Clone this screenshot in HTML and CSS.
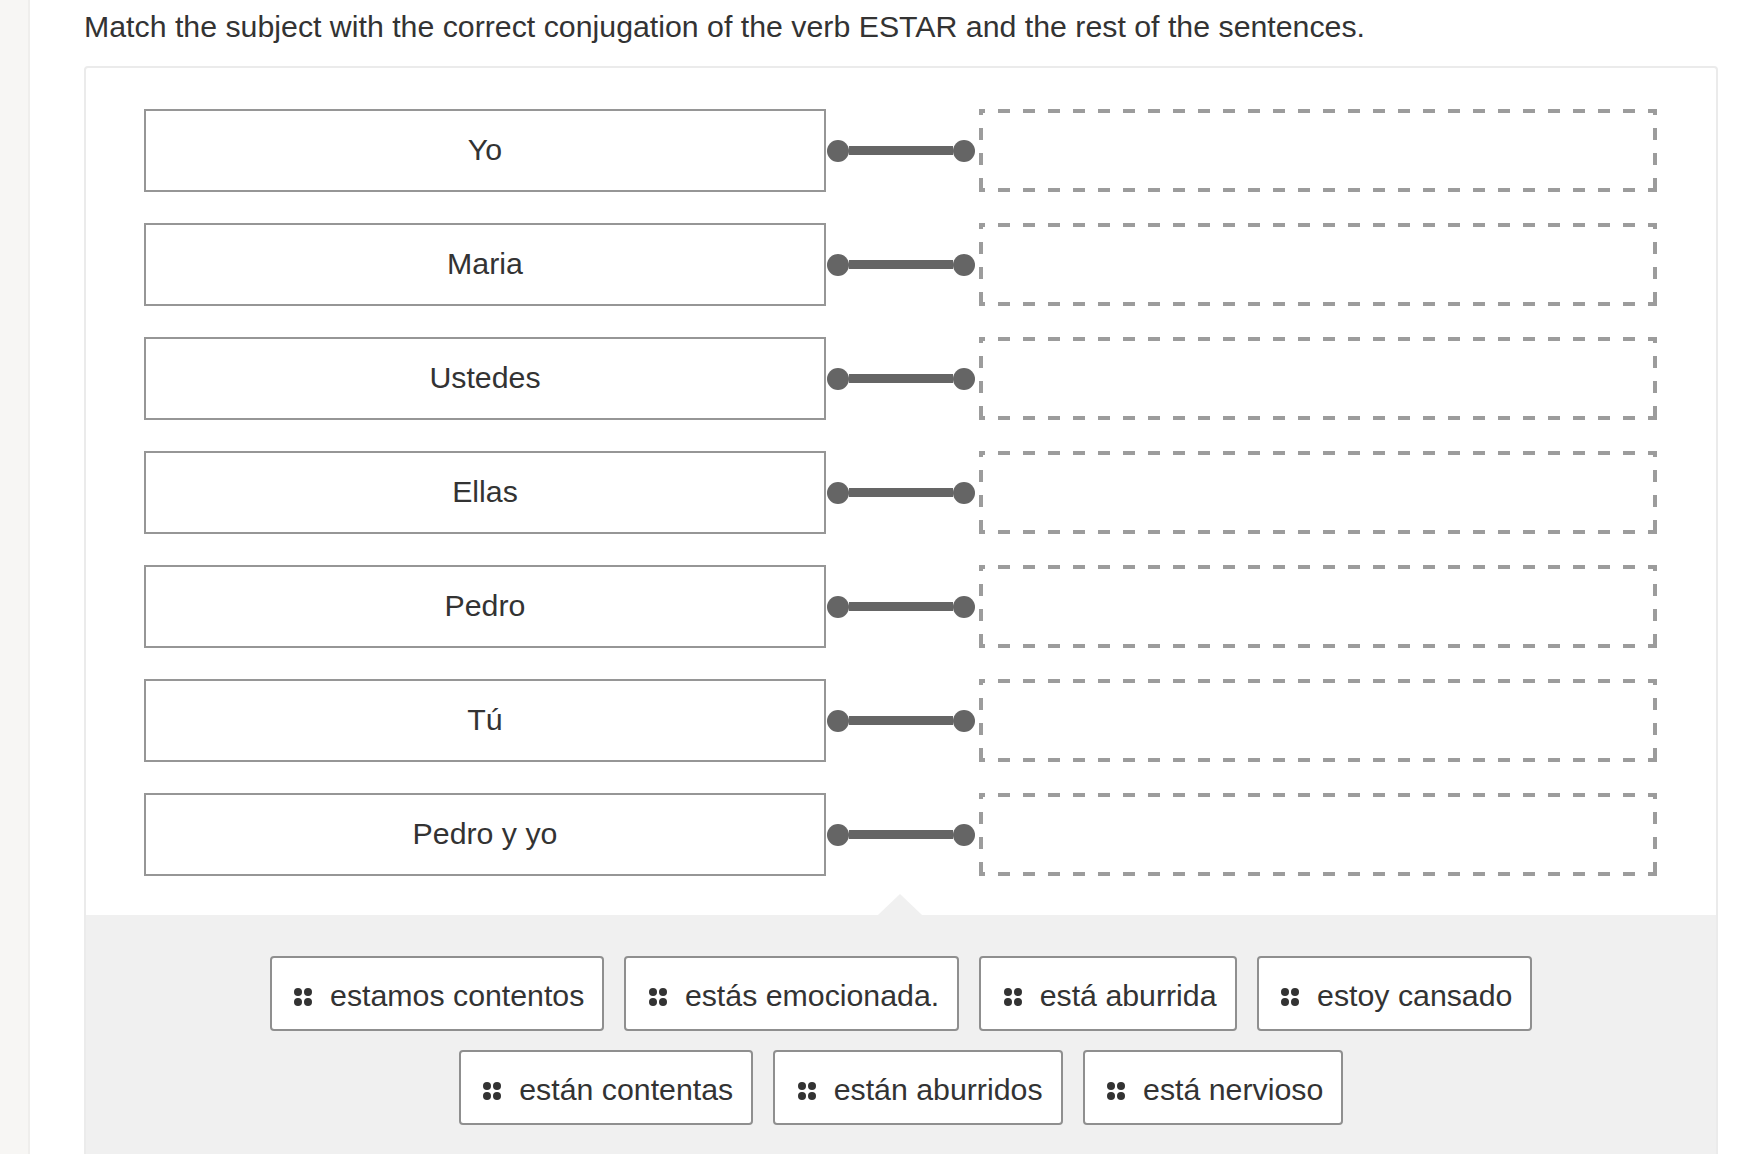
FILE: index.html
```html
<!DOCTYPE html>
<html lang="en">
<head>
<meta charset="utf-8">
<title>Match ESTAR</title>
<link rel="stylesheet" href="styles.css">
</head>
<body>
<div class="page">
  <aside class="sidebar"></aside>
  <main class="content">
    <p class="title">Match the subject with the correct conjugation of the verb ESTAR and the rest of the sentences.</p>
    <section class="card">
      <div class="pairs">
        <div class="row"><div class="subject">Yo</div><div class="connector"><span class="dot"></span><span class="bar"></span><span class="dot"></span></div><div class="target"></div></div>
        <div class="row"><div class="subject">Maria</div><div class="connector"><span class="dot"></span><span class="bar"></span><span class="dot"></span></div><div class="target"></div></div>
        <div class="row"><div class="subject">Ustedes</div><div class="connector"><span class="dot"></span><span class="bar"></span><span class="dot"></span></div><div class="target"></div></div>
        <div class="row"><div class="subject">Ellas</div><div class="connector"><span class="dot"></span><span class="bar"></span><span class="dot"></span></div><div class="target"></div></div>
        <div class="row"><div class="subject">Pedro</div><div class="connector"><span class="dot"></span><span class="bar"></span><span class="dot"></span></div><div class="target"></div></div>
        <div class="row"><div class="subject">Tú</div><div class="connector"><span class="dot"></span><span class="bar"></span><span class="dot"></span></div><div class="target"></div></div>
        <div class="row"><div class="subject">Pedro y yo</div><div class="connector"><span class="dot"></span><span class="bar"></span><span class="dot"></span></div><div class="target"></div></div>
      </div>
      <div class="bank">
        <div class="chips">
          <div class="chip"><svg class="grip" viewBox="0 0 18 18" width="18" height="18"><circle cx="4" cy="4" r="4"/><circle cx="14" cy="4" r="4"/><circle cx="4" cy="14" r="4"/><circle cx="14" cy="14" r="4"/></svg><span>estamos contentos</span></div>
          <div class="chip"><svg class="grip" viewBox="0 0 18 18" width="18" height="18"><circle cx="4" cy="4" r="4"/><circle cx="14" cy="4" r="4"/><circle cx="4" cy="14" r="4"/><circle cx="14" cy="14" r="4"/></svg><span>estás emocionada.</span></div>
          <div class="chip"><svg class="grip" viewBox="0 0 18 18" width="18" height="18"><circle cx="4" cy="4" r="4"/><circle cx="14" cy="4" r="4"/><circle cx="4" cy="14" r="4"/><circle cx="14" cy="14" r="4"/></svg><span>está aburrida</span></div>
          <div class="chip"><svg class="grip" viewBox="0 0 18 18" width="18" height="18"><circle cx="4" cy="4" r="4"/><circle cx="14" cy="4" r="4"/><circle cx="4" cy="14" r="4"/><circle cx="14" cy="14" r="4"/></svg><span>estoy cansado</span></div>
          <div class="chip"><svg class="grip" viewBox="0 0 18 18" width="18" height="18"><circle cx="4" cy="4" r="4"/><circle cx="14" cy="4" r="4"/><circle cx="4" cy="14" r="4"/><circle cx="14" cy="14" r="4"/></svg><span>están contentas</span></div>
          <div class="chip"><svg class="grip" viewBox="0 0 18 18" width="18" height="18"><circle cx="4" cy="4" r="4"/><circle cx="14" cy="4" r="4"/><circle cx="4" cy="14" r="4"/><circle cx="14" cy="14" r="4"/></svg><span>están aburridos</span></div>
          <div class="chip"><svg class="grip" viewBox="0 0 18 18" width="18" height="18"><circle cx="4" cy="4" r="4"/><circle cx="14" cy="4" r="4"/><circle cx="4" cy="14" r="4"/><circle cx="14" cy="14" r="4"/></svg><span>está nervioso</span></div>
        </div>
      </div>
    </section>
  </main>
</div>
</body>
</html>
```

FILE: styles.css
```css
* { box-sizing: border-box; }

html, body {
  margin: 0;
  padding: 0;
  background: #ffffff;
}

body {
  font-family: "Liberation Sans", Arial, Helvetica, sans-serif;
  color: #333333;
  overflow: hidden;
}

.page {
  display: flex;
  min-height: 100vh;
}

.sidebar {
  flex: 0 0 30px;
  background: #f7f6f4;
  border-right: 2px solid #efeeec;
  min-height: 100vh;
}

.content {
  margin-left: 54px;
  width: 1634px;
}

.title {
  margin: 0 0 22px;
  padding-top: 10px;
  font-size: 30.3px;
  line-height: 34px;
  color: #333333;
  white-space: nowrap;
}

.card {
  border: 2px solid #ebebeb;
  border-radius: 4px;
  background: #ffffff;
}

.pairs {
  display: flex;
  flex-direction: column;
  gap: 31px;
  padding: 41px 59px 39px 58px;
}

.row {
  display: flex;
  align-items: center;
  height: 83px;
}

.subject {
  flex: 0 0 682px;
  height: 83px;
  border: 2px solid #969696;
  display: flex;
  align-items: center;
  justify-content: center;
  font-size: 30.3px;
  color: #333333;
  padding-bottom: 2px;
}

.connector {
  flex: 0 0 153px;
  display: flex;
  align-items: center;
  padding-left: 1px;
}

.dot {
  flex: 0 0 22px;
  width: 22px;
  height: 22px;
  border-radius: 50%;
  background: #656565;
}

.bar {
  flex: 0 0 104px;
  height: 9px;
  background: #656565;
}

.target {
  flex: 0 0 678px;
  height: 83px;
  background:
    linear-gradient(90deg, #9c9c9c 50%, transparent 50%) -6px 0 / 25px 4px repeat-x,
    linear-gradient(90deg, #9c9c9c 50%, transparent 50%) -6px 100% / 25px 4px repeat-x,
    linear-gradient(180deg, #9c9c9c 50%, transparent 50%) 0 -6px / 4px 25px repeat-y,
    linear-gradient(180deg, #9c9c9c 50%, transparent 50%) 100% -6px / 4px 25px repeat-y;
}

.bank {
  position: relative;
  background: #f0f0f0;
  padding: 41px 0 40px;
}

.bank::before {
  content: "";
  position: absolute;
  top: -21px;
  left: calc(50% - 23px);
  border-left: 22px solid transparent;
  border-right: 22px solid transparent;
  border-bottom: 21px solid #f0f0f0;
}

.chips {
  max-width: 1300px;
  margin: 0 auto;
  display: flex;
  flex-wrap: wrap;
  justify-content: center;
  gap: 19px 20px;
}

.chip {
  height: 75px;
  display: flex;
  align-items: center;
  gap: 18px;
  padding: 4px 18px 0 22.5px;
  background: #ffffff;
  border: 2px solid #8f8f8f;
  border-radius: 4px;
  font-size: 30.3px;
  color: #333333;
  white-space: nowrap;
}

.grip {
  flex: 0 0 18px;
  fill: #333333;
  margin-top: 2px;
}
```
